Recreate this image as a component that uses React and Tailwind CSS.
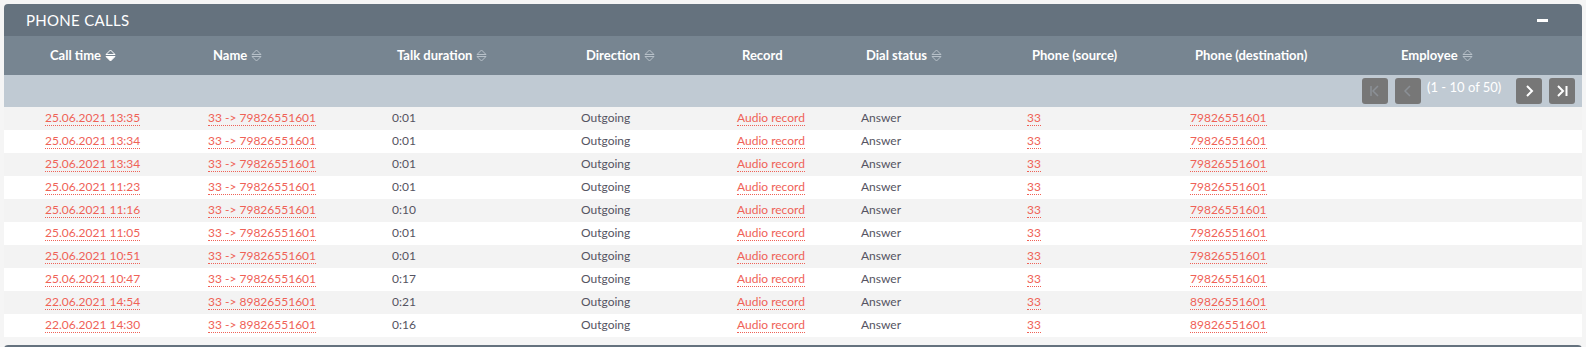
import React from "react";

const rows = [
  ["25.06.2021 13:35", "33 -> 79826551601", "0:01", "79826551601"],
  ["25.06.2021 13:34", "33 -> 79826551601", "0:01", "79826551601"],
  ["25.06.2021 13:34", "33 -> 79826551601", "0:01", "79826551601"],
  ["25.06.2021 11:23", "33 -> 79826551601", "0:01", "79826551601"],
  ["25.06.2021 11:16", "33 -> 79826551601", "0:10", "79826551601"],
  ["25.06.2021 11:05", "33 -> 79826551601", "0:01", "79826551601"],
  ["25.06.2021 10:51", "33 -> 79826551601", "0:01", "79826551601"],
  ["25.06.2021 10:47", "33 -> 79826551601", "0:17", "79826551601"],
  ["22.06.2021 14:54", "33 -> 89826551601", "0:21", "89826551601"],
  ["22.06.2021 14:30", "33 -> 89826551601", "0:16", "89826551601"],
];

const grid = "grid grid-cols-[41px_163px_184px_189px_156px_124px_166px_163px_206px_1fr]";

function SortIcon({ active }) {
  const c = active ? "#ffffff" : "#b8c1c9";
  return (
    <svg width="11" height="13" viewBox="0 0 11 13" className="ml-[4px] shrink-0">
      <path d="M1 5.5 L5.5 1 L10 5.5 Z" fill="none" stroke={c} strokeWidth="1" strokeLinejoin="round" />
      <path d="M1 7.5 L5.5 12 L10 7.5 Z" fill={active ? c : "none"} stroke={c} strokeWidth="1" strokeLinejoin="round" />
    </svg>
  );
}

function Head({ children, sort, active }) {
  return (
    <div className="flex items-center pl-[5px] text-[13px] font-bold text-white whitespace-nowrap">
      {children}
      {sort && <SortIcon active={active} />}
    </div>
  );
}

function Link({ children }) {
  return (
    <span className="text-[#ef6257] border-b border-dotted border-[#ef6257] leading-[15px]">{children}</span>
  );
}

function PageBtn({ children }) {
  return (
    <div className="w-[26px] h-[26px] rounded-[3px] bg-[#777777] flex items-center justify-center">
      {children}
    </div>
  );
}

export default function App() {
  return (
    <div className="bg-[#f5f5f5] w-[1586px] h-[347px] pt-[4px] px-[4px] overflow-hidden" style={{ fontFamily: "Lato, 'Open Sans', sans-serif" }}>
      <div className="rounded-t-[4px] overflow-hidden">
        <div className="h-[32px] bg-[#65727e] flex items-center justify-between pl-[22px] pr-[34px]">
          <span className="text-white text-[15px] tracking-[0.3px]">PHONE CALLS</span>
          <div className="w-[11px] h-[3px] bg-white" />
        </div>
        <div className={`${grid} h-[39px] bg-[#778591] items-center`}>
          <div />
          <Head sort active>Call time</Head>
          <Head sort>Name</Head>
          <Head sort>Talk duration</Head>
          <Head sort>Direction</Head>
          <Head>Record</Head>
          <Head sort>Dial status</Head>
          <Head>Phone (source)</Head>
          <Head>Phone (destination)</Head>
          <Head sort>Employee</Head>
        </div>
        <div className="h-[32px] bg-[#c0cad3] flex items-center justify-end pr-[7px]">
          <PageBtn>
            <svg width="14" height="14" viewBox="0 0 14 14">
              <path d="M3 2 V12 M10 2 L5 7 L10 12" fill="none" stroke="#8b9096" strokeWidth="1.5" />
            </svg>
          </PageBtn>
          <div className="ml-[7px]">
            <PageBtn>
              <svg width="14" height="14" viewBox="0 0 14 14">
                <path d="M9 2 L4 7 L9 12" fill="none" stroke="#8b9096" strokeWidth="1.5" />
              </svg>
            </PageBtn>
          </div>
          <span className="ml-[6px] w-[89px] self-start mt-[3px] text-white text-[13px] whitespace-nowrap">(1 - 10 of 50)</span>
          <PageBtn>
            <svg width="14" height="14" viewBox="0 0 14 14">
              <path d="M5 2 L10 7 L5 12" fill="none" stroke="#ffffff" strokeWidth="2" />
            </svg>
          </PageBtn>
          <div className="ml-[7px]">
            <PageBtn>
              <svg width="14" height="14" viewBox="0 0 14 14">
                <path d="M3 2 L8 7 L3 12 M11.5 2 V12" fill="none" stroke="#ffffff" strokeWidth="2" />
              </svg>
            </PageBtn>
          </div>
        </div>
        <div>
          {rows.map((r, i) => (
            <div key={i} className={`${grid} h-[23px] items-center pb-[1px] text-[12px] text-[#555462] ${i % 2 === 0 ? "bg-[#f3f3f3]" : "bg-white"}`}>
              <div />
              <div><Link>{r[0]}</Link></div>
              <div><Link>{r[1]}</Link></div>
              <div>{r[2]}</div>
              <div>Outgoing</div>
              <div><Link>Audio record</Link></div>
              <div>Answer</div>
              <div><Link>33</Link></div>
              <div><Link>{r[3]}</Link></div>
              <div />
            </div>
          ))}
        </div>
      </div>
      <div className="mt-[8px] h-[10px] rounded-t-[4px] bg-[#65727e]" />
    </div>
  );
}
